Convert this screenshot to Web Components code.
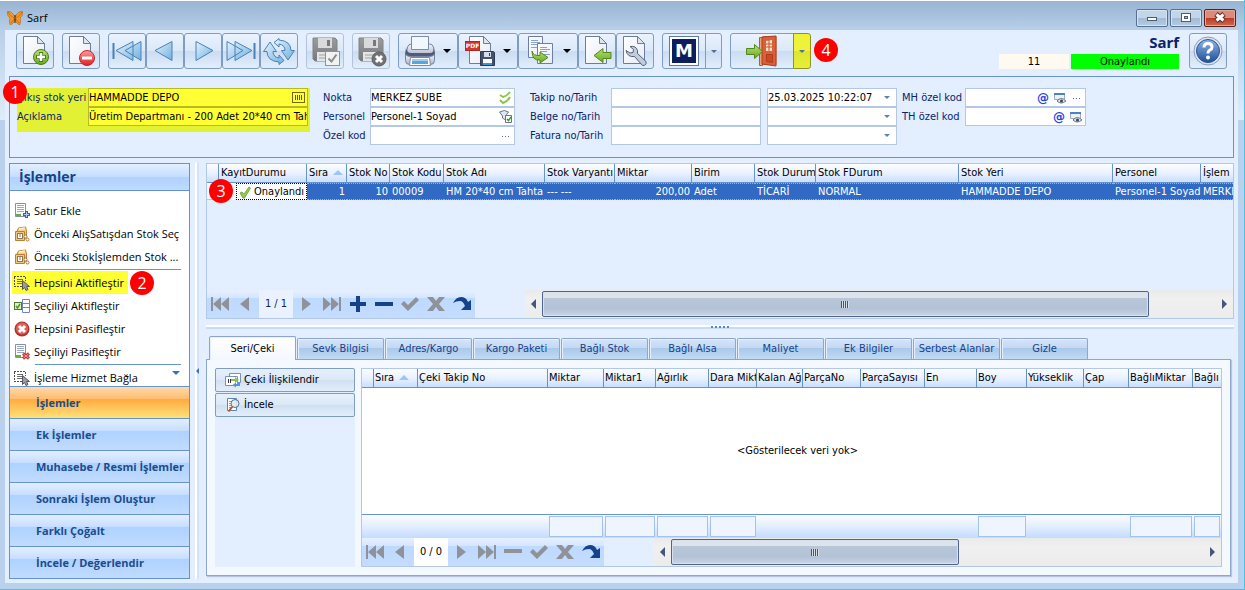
<!DOCTYPE html>
<html lang="tr">
<head>
<meta charset="utf-8">
<title>Sarf</title>
<style>
    html, body { height: 100%; margin: 0; }
    body {
        --line: #6593cf;
        --field-line: #b3c8e6;
        --face: #e3eeff;
        --navy: #0a246a;
        --mark: #ffff33;
        --side-font: "Open Sans", "Noto Sans", sans-serif;
        font-family: "DejaVu Sans Condensed", "Noto Sans", sans-serif;
        font-size: 11px;
        line-height: 16px;
        color: #000;
        overflow: hidden;
    }
</style>
</head>
<body>
<app-window caption="Sarf">
    <tool-bar slot="bar"></tool-bar>
    <entry-form slot="form"></entry-form>
    <side-panel slot="side" caption="İşlemler"></side-panel>
    <split-line slot="side" vertical></split-line>
    <data-grid slot="main" source="stock"></data-grid>
    <split-line slot="main"></split-line>
    <tab-pages slot="main">
        <action-list slot="left"></action-list>
        <data-grid source="series"></data-grid>
    </tab-pages>
</app-window>

<script>
const DEFS = `<defs>
    <linearGradient id="bl" x1="0" y1="0" x2="1" y2="1"><stop offset="0" stop-color="#e6f3fc"/><stop offset="1" stop-color="#6fb0de"/></linearGradient>
    <linearGradient id="gr" x1="0" y1="0" x2="0" y2="1"><stop offset="0" stop-color="#b9e070"/><stop offset="1" stop-color="#65a824"/></linearGradient>
    <linearGradient id="rd" x1="0" y1="0" x2="0" y2="1"><stop offset="0" stop-color="#ff9a94"/><stop offset="1" stop-color="#dc1f26"/></linearGradient>
    <linearGradient id="pg" x1="0" y1="0" x2="1" y2="1"><stop offset="0" stop-color="#fff"/><stop offset="1" stop-color="#e6ebf4"/></linearGradient>
    <linearGradient id="hp" x1="0" y1="0" x2="0" y2="1"><stop offset="0" stop-color="#8db4e4"/><stop offset="1" stop-color="#20509c"/></linearGradient>
    <linearGradient id="gy" x1="0" y1="0" x2="0" y2="1"><stop offset="0" stop-color="#9a9da0"/><stop offset="1" stop-color="#77797c"/></linearGradient>
    <linearGradient id="pr" x1="0" y1="0" x2="0" y2="1"><stop offset="0" stop-color="#f1f4fa"/><stop offset="1" stop-color="#a9b6cd"/></linearGradient>
    <linearGradient id="or" x1="0" y1="0" x2="0" y2="1"><stop offset="0" stop-color="#fde3a0"/><stop offset="1" stop-color="#e9a04a"/></linearGradient>
</defs>`;

const PAGE = `<path d="M4.500 1.500h14l7 7v20h-21z" fill="url(#pg)" stroke="#6c7c9c"/><path d="M18.500 1.500v7h7z" fill="#dfe6f1" stroke="#6c7c9c"/>`;
const FLOPPY = `<path d="M4 3h22l2 2v21H6l-2-2z" fill="url(#gy)" stroke="#808285"/><path d="M9 3h14v10H9z" fill="#d8dadc"/><path d="M18 5h3v6h-3z" fill="#77797c"/><path d="M8 17h16v9H8z" fill="#e4e5e6"/><path d="M10 20h12M10 23h12" stroke="#a0a2a4"/>`;
const SHEET = `<path d="M1.500 .5h10v13h-10z" fill="#fff" stroke="#8390ad"/><path d="M3 2.500h7M3 4.500h7M3 6.500h7M3 8.500h7" stroke="#9aa8c6"/><path d="M2 11h5v2H2z" fill="#6cae3a"/>`;

const ICONS = {
    butterfly: [16, `<path d="M8 7Q5 1 .5 1.500Q0 6 3 8Q2 10 3 14.500Q6 15 8 9Q10 15 13 14.500Q14 10 13 8Q16 6 15.500 1.500Q11 1 8 7z" fill="#f29a2c" stroke="#b8660f" stroke-width=".7"/><path d="M1 2Q3 6 7 8M15 2Q13 6 9 8M4 13l3-4M12 13L9 9" stroke="#c06a12" stroke-width=".8"/><path d="M8 5v8" stroke="#33200a"/>`],
    add: [32, PAGE + `<circle cx="22" cy="22" r="7.500" fill="url(#gr)" stroke="#4a7c1c"/><path d="M22 17v10M17 22h10" stroke="#4a7c1c" stroke-width="4"/><path d="M22 18v8M18 22h8" stroke="#fff" stroke-width="2.500"/>`],
    remove: [32, PAGE + `<circle cx="22" cy="23" r="7.500" fill="url(#rd)" stroke="#c0272d"/><path d="M17 21.500h10v3H17z" fill="#fff"/>`],
    first: [32, `<path d="M2.500 8v16" stroke="#4b80b8" stroke-width="2"/><path d="M5 15.500L22 6.500v19zM14 15.500L30 6.500v19z" fill="url(#bl)" stroke="#4b80b8"/>`],
    prev: [32, `<path d="M6 15.500L23 6.500v19z" fill="url(#bl)" stroke="#4b80b8"/>`],
    next: [32, `<path d="M26 15.500L9 6.500v19z" fill="url(#bl)" stroke="#4b80b8"/>`],
    last: [32, `<path d="M29.500 8v16" stroke="#4b80b8" stroke-width="2"/><path d="M18 15.500L2 6.500v19zM27 15.500L10 6.500v19z" fill="url(#bl)" stroke="#4b80b8"/>`],
    refresh: [32, `<path d="M.5 16.500L7 7l6.500 9.500H10Q10 22 16 23v-3l5 5.500-5 4V27Q4 26 4 16.500z" fill="url(#bl)" stroke="#4b80b8"/><path d="M31.500 15.500L25 25l-6.500-9.500H22Q22 10 16 9v3l-5-4.500 5-4V5q12 1 12 10.500z" fill="url(#bl)" stroke="#4b80b8"/>`],
    saveok: [32, FLOPPY + `<rect x="16.500" y="16.500" width="14" height="14" fill="#f2f2f2" stroke="#909294"/><path d="M19.500 23.500l3 3 5-7" stroke="#8a8d90" stroke-width="2" fill="none"/>`],
    saveno: [32, FLOPPY + `<circle cx="24" cy="24" r="7" fill="#707276" stroke="#5c5e62"/><path d="M21 21l6 6M27 21l-6 6" stroke="#fff" stroke-width="3"/>`],
    print: [32, `<path d="M3.500 12q1-3 4-3h18q3 0 4 3l1 9H2z" fill="url(#pr)" stroke="#76849f"/><path d="M7.500 1.500h17v13h-17z" fill="#f2f6fd" stroke="#7d8ba6"/><path d="M2 13q1 5 5 5h19q4 0 4-5l1 6q-1 3-4 3H5q-3 0-4-3z" fill="#515d77"/><path d="M1.500 19.500q2 2 5 2h19q3 0 5-2v6q0 4-4 4h-21q-4 0-4-4z" fill="url(#pr)" stroke="#76849f"/><path d="M6.500 22.500h19l1 8h-21z" fill="#fff" stroke="#7d8ba6"/><path d="M8 24h16v5H8z" fill="#5aa4dc"/><path d="M8 24h16v2H8z" fill="#9dcdf0"/>`],
    pdf: [32, `<path d="M5.500 1.500h14l7 7v20h-21z" fill="url(#pg)" stroke="#6c7c9c"/><path d="M19.500 1.500v7h7z" fill="#dfe6f1" stroke="#6c7c9c"/><rect x="1.500" y="6.500" width="14" height="9" fill="#d8342c" stroke="#b02620"/><text x="8.500" y="13" font-family="DejaVu Sans" font-weight="bold" font-size="6" text-anchor="middle" fill="#fff">PDF</text><path d="M16.500 16.500h13l1 1v13h-14z" fill="#44516c" stroke="#2e3a50"/><path d="M20 17h7v5h-7z" fill="#d6dee9"/><path d="M25 18h1v3h-1z" fill="#2e3a50"/><path d="M19 24h9v6h-9z" fill="#fff"/><path d="M19 28h9v2h-9z" fill="#4b90d4"/>`],
    copy: [32, `<path d="M4.500 1.500h14v21h-14z" fill="url(#pg)" stroke="#6c7cac"/><path d="M7 5.500h7M7 7.500h9M7 9.500h7M7 12.500h9" stroke="#86a2cf"/><path d="M13.500 8.500h15v20h-15z" fill="url(#pg)" stroke="#6c7cac"/><path d="M16 12.500h7M16 14.500h10M16 16.500h7M16 19.500h10" stroke="#86a2cf"/><path d="M8 16q1 5 8 4.500v-3.500l8 5.500-8 5.500v-3Q8 26 8 16z" fill="url(#gr)" stroke="#53861c"/>`],
    import: [32, PAGE + `<path d="M30 17.500h-8v-4L13 20.500l9 7v-4h8z" fill="url(#gr)" stroke="#53861c"/>`],
    wrench: [32, PAGE + `<path d="M11 11.500q6-1 7.500 4v3l8.500 8q1 4-3.500 4L15.500 21.500q-7 1-8.500-6l4 2.500 3-.5.500-3z" fill="#c2ccda" stroke="#526078"/>`],
    door: [32, `<path d="M18 1.500h13v28H18z" fill="#fbe8d6" stroke="#c47748"/><path d="M14.500 2.500h3v28h-3z" fill="#e9a482" stroke="#b55a30"/><path d="M17 2l14-1v30l-14-2z" fill="#d9603a" stroke="#a9431f"/><path d="M21 6l6-1v11h-6z" fill="#fbe3c4"/><path d="M24 5v11M21 9h6M21 12h6" stroke="#c4532f"/><path d="M21.500 19.500h6v8l-6-1z" fill="#c84b25" stroke="#b03e1a"/><path d="M1.500 13.500h8v-4l8 7-8 7v-4h-8z" fill="url(#gr)" stroke="#53861c"/>`],
    help: [32, `<circle cx="16" cy="16" r="14" fill="#dce6f3" stroke="#8c9dba"/><circle cx="16" cy="16" r="11.500" fill="url(#hp)" stroke="#2f5591"/><path d="M12 12.500q0-4 4-4 4 0 4 3.500 0 2-2 3-2 1-2 3.500" stroke="#fff" stroke-width="3" fill="none"/><circle cx="16" cy="22.500" r="2" fill="#fff"/>`],
    min: [16, `<rect x="3.500" y="7.500" width="9" height="3" fill="#fff" stroke="#4d5c70"/>`],
    max: [16, `<rect x="3.500" y="3.500" width="9" height="8" fill="#fff" stroke="#4d5c70"/><rect x="6.500" y="6.500" width="3" height="2" fill="#9fb6cf" stroke="#4d5c70"/>`],
    close: [16, `<path d="M4 4l8 7M12 4l-8 7" stroke="#5c2620" stroke-width="5"/><path d="M4.500 4.500l7 6M11.500 4.500l-7 6" stroke="#fff" stroke-width="3"/>`],
    barcode: [16, `<rect x="1.500" y="2.500" width="12" height="10" fill="none" stroke="#6f6a1e"/><path d="M4.500 5v5M6.500 5v5M8.500 5v5M10.500 5v5" stroke="#5a5518"/>`],
    checks: [16, `<path d="M2 5l3 2q4-1 7-5M2 10l3 3q5-2 7-6" stroke="#8fc64a" stroke-width="2" fill="none"/>`],
    people: [16, `<path d="M1.500 3q5-3 9 0l-3 4v4l-3-2V7z" fill="#e2e6ee" stroke="#66758e"/><path d="M7.500 6.500h6v7h-6z" fill="#fff" stroke="#66758e"/><path d="M9 10l1.500 1.500L13 8" stroke="#3e9a2a" stroke-width="1.500" fill="none"/>`],
    dots: [16, `<path d="M4 8.500h1M7 8.500h1M10 8.500h1" stroke="#4d6f9f"/>`],
    eye: [16, `<path d="M1.500 3.500h10v6h-10z" fill="#e9f1fb" stroke="#9aacc6"/><path d="M1 3h11v2H1z" fill="#4f80c4"/><path d="M4 11q4-5 9 0q-5 4-9 0z" fill="#dfe3ea" stroke="#6c7684"/><circle cx="8.500" cy="11" r="1.500" fill="#3c4654"/>`],
    rowadd: [16, SHEET + `<path d="M12.500 8v7M9 11.500h7" stroke="#2f66a8" stroke-width="3"/><path d="M12.500 9v5M10 11.500h5" stroke="#a9cdf2"/>`],
    box: [16, `<path d="M2.500 6l2-4 7-1 1 4v6l-2 2h-8z" fill="url(#or)" stroke="#b9802f"/><path d="M1.500 5.500h9v9h-9z" fill="#f3c67c" stroke="#b9802f"/><path d="M5 3l6-1" stroke="#fff2cf" stroke-width="1.500"/><rect x="3.500" y="7.500" width="5" height="5" fill="#fff" stroke="#8a7a60"/><path d="M6 8v3" stroke="#8a7a60"/><circle cx="11.500" cy="10.500" r="1.500" fill="#fff" stroke="#b0762c"/><circle cx="13.500" cy="13.500" r="1.500" fill="#fff" stroke="#b0762c"/>`],
    pick: [16, `<path d="M0 1.500h11M0 11.500h8M.5 2v10M11.500 2v4" stroke="#4d4d4d" stroke-dasharray="2 1" fill="none"/><path d="M3 4.500h6M3 6.500h6M3 8.500h5" stroke="#6b6b6b"/><path d="M8.500 5.500v9l2-2 1.500 3 2-1-1.500-3h3z" fill="#9a9da3" stroke="#55585e"/>`],
    cells: [16, `<path d="M8.500 1.500h7v13h-7zM8.500 5.500h7M8.500 9.500h7" fill="#fff" stroke="#7186c0"/><rect x=".5" y="4.500" width="7" height="7" fill="#dcefc9" stroke="#4e7a2e"/><path d="M2 8l1.500 2L6 6" stroke="#4a9a1c" stroke-width="1.500" fill="none"/>`],
    stop: [16, `<circle cx="8" cy="8" r="7.500" fill="#b5302b"/><circle cx="8" cy="7.500" r="6" fill="#dd625b"/><path d="M5 5l6 6M11 5l-6 6" stroke="#fff" stroke-width="3"/>`],
    rowdel: [16, SHEET + `<path d="M9 9.500l6 5M15 9.500l-6 5" stroke="#c4372f" stroke-width="3"/><path d="M9.500 10l5 4M14.500 10l-5 4" stroke="#f3a09a"/>`],
    tick: [16, `<path d="M2 9l2-1 2 2 5-7 1.500 1-6 10H5z" fill="#94cc4c" stroke="#5c9f2c" stroke-width=".8"/>`],
    link: [16, `<path d="M4.500 1.500h11v9h-11z" fill="#fff" stroke="#7d8fc0"/><path d="M.5 4.500h12v9H.5z" fill="#fff" stroke="#7d8fc0"/><path d="M3.500 7v4M5.500 7v4M7.500 7v2" stroke="#334"/><path d="M6 7h4V5l4 3-4 3V9H6z" fill="#8cc24c"/><path d="M15 10v4h-4v1.500L7.500 13l3.500-2.500V12h2v-2z" fill="#5c93d4"/>`],
    inspect: [16, `<path d="M2.500 1.500h9v12h-9z" fill="#fff" stroke="#5f86ad"/><path d="M4 4.500h4M4 6.500h3M4 8.500h3M4 10.500h3" stroke="#86a2cf"/><circle cx="10" cy="6.500" r="4" fill="#dbe9f6" fill-opacity=".9" stroke="#5e6e84"/><path d="M7.500 9.500L3.500 14.500" stroke="#b5542c" stroke-width="2"/>`],
    nfirst: [20, `<path d="M1 3h2v14H1zM11 3v14l-8-7zM19 3v14l-8-7z" fill="#8f9399"/>`],
    nprev: [20, `<path d="M13 3v14l-9-7z" fill="#8f9399"/>`],
    nnext: [20, `<path d="M6 3v14l9-7z" fill="#8f9399"/>`],
    nlast: [20, `<path d="M19 3h-2v14h2zM9 3v14l8-7zM1 3v14l8-7z" fill="#8f9399"/>`],
    nplus: [20, `<path d="M8 2h4v6h6v4h-6v6H8v-6H2V8h6z" fill="#15428b"/>`],
    nminus: [20, `<path d="M1 8h18v4H1z" fill="#15428b"/>`],
    nminusoff: [20, `<path d="M1 7h18v4H1z" fill="#8f9399"/>`],
    ncheck: [20, `<path d="M1 10l3-3 4 4 8-8 3 3L8 17z" fill="#8f9399"/>`],
    ncross: [20, `<path d="M1 3h6l3 4 3-4h6l-6 7 6 7h-6l-3-4-3 4H1l6-7z" fill="#8f9399"/>`],
    nredo: [20, `<path d="M1 9Q4 3 9 3q5 0 7 5l3-2v10H9l4-4Q11 7 8 7 4 7 1 9z" fill="#15428b"/>`]
};

class UiElement extends HTMLElement {
    constructor() {
        super();
        this.attachShadow({ mode: "open" });
    }

    connectedCallback() {
        const template = document.createElement("template");
        template.innerHTML = this.render();
        this.shadowRoot.replaceChildren(template.content.cloneNode(true));
    }
}

class UiIcon extends UiElement {
    render() {
        const [size, body] = ICONS[this.getAttribute("name")];
        return `<style>:host { display: block; flex: none; } svg { display: block; }</style>
        <svg width="${size}" height="${size}" viewBox="0 0 ${size} ${size}" fill="none" aria-hidden="true">${DEFS}${body}</svg>`;
    }
}

class CalloutBadge extends UiElement {
    render() {
        return `<style>:host {
            display: flex; align-items: center; justify-content: center; flex: none;
            width: 24px; height: 24px; border-radius: 50%; background: #f00; color: #fff;
            font: 16px/24px "Open Sans", sans-serif;
        }</style><slot></slot>`;
    }
}

class AppWindow extends UiElement {
    render() {
        return `<style>
        :host {
            display: flex; flex-direction: column; box-sizing: border-box; min-height: 100vh;
            border: solid #4cc3e0; border-width: 0 1px 1px 0; padding: 0 6px 6px 5px;
            background: linear-gradient(#97b3d1, #b7cfe9 30px, #e0ecfb 120px, #b9d1ec 120px);
            box-shadow: inset 0 1px #fff;
        }
        header { display: flex; align-items: center; height: 30px; padding: 6px 2px 0 2px; box-sizing: border-box; gap: 4px; }
        h1 { flex: 1; margin: 0; font: 11px/16px var(--side-font); }
        header button {
            display: flex; align-items: center; justify-content: center; width: 32px; height: 18px; padding: 0;
            border: 1px solid #58708f; border-radius: 2px; box-shadow: inset 0 0 0 1px #d5e3f3;
            background: linear-gradient(#c3d5e9 50%, #a1bad6 50%, #b5cbe3);
        }
        header button.close { border-color: #5b1f1a; box-shadow: inset 0 0 0 1px #e4a79b; background: linear-gradient(#dc8a7a 50%, #b93a24 50%, #cf6a52); }
        .nav { display: flex; gap: 2px; }
        .client { flex: 1; display: flex; flex-direction: column; background: var(--face); }
        .body { flex: 1; display: flex; padding: 5px 4px 4px; min-height: 0; }
        .side { display: flex; }
        main { flex: 1; min-width: 0; display: flex; flex-direction: column; }
        </style>
        <header>
            <ui-icon name="butterfly"></ui-icon>
            <h1>${this.getAttribute("caption")}</h1>
            <div class="nav">
                <button aria-label="Simge durumuna küçült"><ui-icon name="min"></ui-icon></button>
                <button aria-label="Ekranı kapla"><ui-icon name="max"></ui-icon></button>
                <button class="close" aria-label="Kapat"><ui-icon name="close"></ui-icon></button>
            </div>
        </header>
        <div class="client">
            <slot name="bar"></slot>
            <slot name="form"></slot>
            <div class="body">
                <div class="side"><slot name="side"></slot></div>
                <main><slot name="main"></slot></main>
            </div>
        </div>`;
    }
}

class ToolButton extends UiElement {
    render() {
        const split = this.hasAttribute("split");
        const arrow = this.hasAttribute("menu") ? `<i></i>` : "";
        const label = this.getAttribute("label");
        return `<style>
        :host { display: flex; }
        button {
            flex: 1; display: flex; align-items: center; justify-content: center; gap: 7px; box-sizing: border-box;
            min-width: 38px; height: 36px; padding: 0; border: 1px solid #7f9cc4; border-radius: 3px;
            background: linear-gradient(#eaf3fe, #dbe8f8 50%, #c9dcf2 50%, #e2eefc);
        }
        :host([menu]) button { min-width: 60px; justify-content: flex-start; padding-left: 5px; }
        :host([off]) button { border-color: #b5c3d8; }
        :host([split]) button:first-of-type { border-radius: 3px 0 0 3px; min-width: 44px; }
        :host([split][wide]) button:first-of-type { min-width: 64px; padding-left: 14px; justify-content: flex-start; }
        :host([split]) .drop { flex: none; min-width: 17px; width: 17px; margin-left: -1px; border-radius: 0 3px 3px 0; }
        :host([marked]) .drop { background: linear-gradient(#eef23a 50%, #e0e430 50%, #e8ee38); border-color: #94921e; width: 18px; }
        i { border: 4px solid transparent; border-top-color: #000; border-bottom: 0; }
        .drop i { border-width: 3px 3px 0; border-top-color: #4f7096; }
        </style>
        <button aria-label="${label}"${this.hasAttribute("off") ? " disabled" : ""}><slot></slot>${arrow}</button>
        ${split ? `<button class="drop" aria-label="${label} seçenekleri"><i></i></button>` : ""}`;
    }
}

class ToolBar extends UiElement {
    render() {
        const tool = (name, label, attrs = "") => `<tool-button label="${label}" ${attrs}><ui-icon name="${name}"></ui-icon></tool-button>`;
        return `<style>
        :host { display: flex; align-items: flex-start; gap: 8px; padding: 3px 11px 7px; }
        .group { display: flex; }
        .logo { box-sizing: border-box; width: 30px; height: 30px; border: 1px solid #5f7aa8; padding: 2px; background: #fff; }
        .logo b { display: block; background: #0c1f5c; color: #fff; font: bold 18px/24px "DejaVu Sans", sans-serif; text-align: center; }
        callout-badge { margin: 5px 0 0 -5px; }
        .state { margin: 0 2px 0 auto; display: grid; grid-template-columns: 70px 108px; gap: 2px; text-align: center; }
        .state b { grid-column: 1 / 3; text-align: right; color: var(--navy); font: bold 15px/19px "Noto Sans", sans-serif; }
        .state span { line-height: 15px; background: #fffaf0; }
        .state .ok { background: #0f0; }
        </style>
        ${tool("add", "Yeni")}
        ${tool("remove", "Sil")}
        <div class="group">
            ${tool("first", "İlk")}${tool("prev", "Önceki")}${tool("next", "Sonraki")}${tool("last", "Son")}${tool("refresh", "Yenile")}
        </div>
        ${tool("saveok", "Kaydet", "off")}
        ${tool("saveno", "Vazgeç", "off")}
        <div class="group">
            ${tool("print", "Yazdır", "menu")}${tool("pdf", "PDF kaydet", "menu")}${tool("copy", "Kopyala", "menu")}${tool("import", "Al")}${tool("wrench", "Ayarlar")}
        </div>
        <tool-button label="Modül" split><span class="logo"><b>M</b></span></tool-button>
        ${tool("door", "Çıkış", "split wide marked")}
        <callout-badge>4</callout-badge>
        <div class="state"><b>Sarf</b><span>11</span><span class="ok">Onaylandı</span></div>
        ${tool("help", "Yardım")}`;
    }
}

class FormField extends UiElement {
    render() {
        const label = this.getAttribute("label");
        const value = this.getAttribute("value") || "";
        const box = this.hasAttribute("combo")
            ? `<select id="f" aria-label="${label}"><option>${value}</option></select><i></i>`
            : `<input id="f" type="text" aria-label="${label}" value="${value}">`;
        return `<style>
        :host { display: flex; height: 19px; }
        label { width: var(--label, 0); color: var(--navy); line-height: 19px; white-space: nowrap; font-size: 11px; }
        .box { flex: 1; min-width: 0; display: flex; align-items: center; box-sizing: border-box; background: var(--field, #fff); border: 1px solid var(--frame, var(--field-line)); }
        input, select { flex: 1; min-width: 0; width: 0; height: 17px; padding: 0; border: 0; margin: 0; outline: 0; background: none; font: inherit; color: #000; appearance: none; }
        i { margin: 0 6px; border: 3px solid transparent; border-top-color: #5c80b0; border-bottom: 0; pointer-events: none; }
        ::slotted(b) { color: #1f45e0; font: bold 12px/16px "DejaVu Sans", sans-serif; margin-right: 4px; }
        </style>
        ${this.hasAttribute("bare") ? "" : `<label for="f">${label}</label>`}
        <div class="box">${box}<slot></slot></div>`;
    }
}

class EntryForm extends UiElement {
    render() {
        return `<style>
        :host { display: flex; align-items: flex-start; position: relative; margin: 0 4px; padding: 11px 7px; min-height: 58px; border: 1px solid var(--line); }
        .col { display: flex; flex-direction: column; }
        .hot { --label: 71px; width: 291px; padding: 0 2px 6px 0; background: #e3f135; --field: var(--mark); --frame: #b5bb20; margin-right: 13px; }
        .point { --label: 47px; width: 192px; margin-right: 15px; }
        .track { --label: 81px; width: 231px; margin-right: 6px; }
        .date { width: 130px; margin-right: 5px; }
        .code { --label: 63px; width: 184px; }
        callout-badge { position: absolute; left: -7px; top: 3px; }
        </style>
        <div class="col hot">
            <form-field label="Çıkış stok yeri" value="HAMMADDE DEPO"><ui-icon name="barcode"></ui-icon></form-field>
            <form-field label="Açıklama" value="Üretim Departmanı - 200 Adet 20*40 cm Tahta"></form-field>
        </div>
        <div class="col point">
            <form-field label="Nokta" value="MERKEZ ŞUBE"><ui-icon name="checks"></ui-icon></form-field>
            <form-field label="Personel" value="Personel-1 Soyad"><ui-icon name="people"></ui-icon></form-field>
            <form-field label="Özel kod"><ui-icon name="dots"></ui-icon></form-field>
        </div>
        <div class="col track">
            <form-field label="Takip no/Tarih"></form-field>
            <form-field label="Belge no/Tarih"></form-field>
            <form-field label="Fatura no/Tarih"></form-field>
        </div>
        <div class="col date">
            <form-field bare combo label="Takip tarihi" value="25.03.2025 10:22:07"></form-field>
            <form-field bare combo label="Belge tarihi"></form-field>
            <form-field bare combo label="Fatura tarihi"></form-field>
        </div>
        <div class="col code">
            <form-field label="MH özel kod"><b>@</b><ui-icon name="eye"></ui-icon><ui-icon name="dots"></ui-icon></form-field>
            <form-field label="TH özel kod"><b>@</b><ui-icon name="eye"></ui-icon></form-field>
        </div>
        <callout-badge>1</callout-badge>`;
    }
}

class SidePanel extends UiElement {
    render() {
        const items = [["rowadd", "Satır Ekle"], ["box", "Önceki AlışSatışdan Stok Seç"], ["box", "Önceki Stokİşlemden Stok ..."], null,
            ["pick", "Hepsini Aktifleştir"], ["cells", "Seçiliyi Aktifleştir"], ["stop", "Hepsini Pasifleştir"], ["rowdel", "Seçiliyi Pasifleştir"], null,
            ["pick", "İşleme Hizmet Bağla"]];
        const groups = ["İşlemler", "Ek İşlemler", "Muhasebe / Resmi İşlemler", "Sonraki İşlem Oluştur", "Farklı Çoğalt", "İncele / Değerlendir"];
        return `<style>
        :host { display: flex; flex-direction: column; box-sizing: border-box; width: 181px; border: 1px solid var(--line); background: #fff; font-family: var(--side-font); }
        h2 { margin: 0; padding-left: 9px; font-size: 14px; line-height: 26px; color: #15428b; background: linear-gradient(#e3efff, #c4ddff 50%, #afd2ff 50%, #c0dbff); border-bottom: 1px solid var(--line); }
        .list { flex: 1 1 0; min-height: 0; overflow: hidden; padding-top: 8px; position: relative; }
        button { display: flex; align-items: center; border: 0; background: none; font: inherit; padding: 0; text-align: left; color: #000; white-space: nowrap; }
        .list button { height: 23px; gap: 4px; padding-left: 4px; font-size: 11px; }
        .list .hot { box-sizing: border-box; min-width: 116px; margin-left: 2px; padding-left: 2px; background: var(--mark); }
        hr { margin: 1px 8px 1px 25px; border: 0; height: 1px; background: var(--line); }
        .item { position: relative; }
        callout-badge { position: absolute; left: 120px; top: 0; }
        .more { position: absolute; right: 9px; top: 180px; border: 4px solid transparent; border-top-color: #3c70b4; border-bottom: 0; }
        nav button { width: 100%; height: 32px; padding-left: 26px; font-size: 11px; font-weight: bold; color: #1c4c8c; border-top: 1px solid var(--line); background: linear-gradient(#e3efff, #c4ddff 40%, #afd2ff 40%, #c0dbff); }
        nav .on { background: linear-gradient(#ffd9aa, #ffbb6e 40%, #ffab3f 40%, #fee17b); }
        </style>
        <h2>${this.getAttribute("caption")}</h2>
        <div class="list">
            ${items.map((item, i) => !item ? "<hr>" : `<div class="item"><button class="${i == 4 ? "hot" : ""}"><ui-icon name="${item[0]}"></ui-icon>${item[1]}</button>${i == 4 ? "<callout-badge>2</callout-badge>" : ""}</div>`).join("")}
            <span class="more"></span>
        </div>
        <nav>${groups.map((name, i) => `<button class="${i ? "" : "on"}">${name}</button>`).join("")}</nav>`;
    }
}

class SplitLine extends UiElement {
    render() {
        return `<style>
        :host { display: flex; align-items: center; justify-content: center; height: 4px; margin: 6px 0; background: linear-gradient(#fff 2px, #c8dcfa 2px); }
        :host([vertical]) { width: 4px; height: auto; margin: 0 7px 0 5px; background: linear-gradient(90deg, #fff 2px, #d3e3fb 2px); }
        i { width: 19px; height: 2px; background: repeating-linear-gradient(90deg, #5b86c4 0 2px, transparent 2px 4px); }
        :host([vertical]) i { width: 0; height: 0; background: none; border: 3px solid transparent; border-right-color: #3f6fb0; border-left: 0; }
        </style><i></i>`;
    }
}

const GRIDS = {
    stock: {
        columns: [["", 12], ["KayıtDurumu", 88], ["Sıra", 40, "up"], ["Stok No", 43], ["Stok Kodu", 54], ["Stok Adı", 101], ["Stok Varyantı", 70], ["Miktar", 77],
            ["Birim", 63], ["Stok Durum", 61], ["Stok FDurum", 143], ["Stok Yeri", 154], ["Personel", 88], ["İşlem"]],
        row: ["", "Onaylandı", "1", "10", "00009", "HM 20*40 cm Tahta", "--- ---", "200,00", "Adet", "TİCARİ", "NORMAL", "HAMMADDE DEPO", "Personel-1 Soyad", "MERKE"],
        right: [2, 3, 7],
        count: "1 / 1",
        buttons: ["nplus", "nminus", "ncheck", "ncross", "nredo"],
        thumb: "90%"
    },
    series: {
        columns: [["", 12], ["Sıra", 44, "up"], ["Çeki Takip No", 130], ["Miktar", 56], ["Miktar1", 52], ["Ağırlık", 53], ["Dara Mikt", 48], ["Kalan Ağ", 46],
            ["ParçaNo", 58], ["ParçaSayısı", 64], ["En", 52], ["Boy", 50], ["Yükseklik", 57], ["Çap", 45], ["BağlıMiktar", 64], ["Bağlı"]],
        sums: [3, 4, 5, 6, 11, 14, 15],
        empty: "<Gösterilecek veri yok>",
        count: "0 / 0",
        buttons: ["nminusoff", "ncheck", "ncross", "nredo"],
        thumb: "54%"
    }
};

const NAMES = { nplus: "Ekle", nminus: "Sil", nminusoff: "Sil", ncheck: "Onayla", ncross: "İptal", nredo: "Yenile" };

class DataGrid extends UiElement {
    render() {
        const grid = GRIDS[this.getAttribute("source")];
        const cell = (text, i) => {
            if (i == 1) return `<td class="state"><span><ui-icon name="tick"></ui-icon>${text}</span></td>`;
            return `<td class="${grid.right.includes(i) ? "num" : ""}">${text}</td>`;
        };
        const cols = `<colgroup>${grid.columns.map(c => `<col${c[1] ? ` style="width: ${c[1]}px"` : ""}>`).join("")}</colgroup>`;
        return `<style>
        :host { display: flex; flex-direction: column; position: relative; box-sizing: border-box; border: 1px solid var(--field-line); min-width: 0; background: var(--face); }
        :host([source=stock]) { height: 156px; }
        :host([source=series]) { flex: 1; }
        table { width: 100%; table-layout: fixed; border-collapse: separate; border-spacing: 0; }
        th, td { padding: 0 0 0 2px; overflow: hidden; white-space: nowrap; text-align: left; font-weight: normal; box-sizing: border-box; }
        :host([source=series]) th { padding-left: 1px; }
        th { height: 19px; background: linear-gradient(#fbfdff, #eaf2ff 50%, #c9deff); border-bottom: 1px solid var(--line); border-right: 1px solid var(--line); line-height: 18px; }
        th:last-child { border-right: 0; }
        th i { display: inline-block; margin-left: 5px; border: 5px solid transparent; border-top: 0; border-bottom-color: #99c5f8; vertical-align: 1px; }
        td { height: 17px; line-height: 15px; background: #316ac5; color: #fff; border: dotted #e8a44c; border-width: 1px 0; }
        td:first-child, td.state { background: #f3f8ff; border-color: #fff #fff var(--field-line); border-style: solid; }
        td.state { padding: 0 0 0 17px; color: #000; border-width: 0; }
        td span { display: flex; align-items: center; height: 15px; border: 1px dotted #000; padding-left: 1px; background: #fff; }
        .num { text-align: right; padding-right: 2px; }
        .body { flex: 1; }
        .empty { display: flex; align-items: center; justify-content: center; background: #fff; padding-left: 12px; }
        .sums td { height: 23px; padding: 1px; background: none; border: 0; }
        .sums { background: linear-gradient(#fbfdff, #e3eeff 50%, #c3dcff); border-top: 1px solid var(--line); }
        .sums div { height: 19px; border: 1px solid #a3c3ec; background: #eff5ff; }
        .foot { display: flex; height: 28px; }
        .nav { display: flex; margin-right: 50px; }
        .nav button { display: flex; align-items: center; justify-content: center; width: 26px; height: 28px; padding: 0; border: 0; background: linear-gradient(#e6f0ff, #d3e5ff 30%, #bfdaff 30%, #c3dcff); }
        .count { width: 34px; line-height: 28px; text-align: center; color: var(--navy); background: #eaf2ff; }
        :host([source=series]) .count { background: #fff; color: #000; }
        callout-badge { position: absolute; left: 2px; top: 15px; }
        </style>
        <table>${cols}
            <thead><tr>${grid.columns.map(c => `<th>${c[0]}${c[2] ? "<i></i>" : ""}</th>`).join("")}</tr></thead>
            ${grid.row ? `<tbody><tr>${grid.row.map(cell).join("")}</tr></tbody>` : ""}
        </table>
        <div class="body ${grid.empty ? "empty" : ""}">${(grid.empty || "").replace("<", "&lt;")}</div>
        ${grid.sums ? `<div class="sums"><table role="presentation">${cols}<tr>${grid.columns.map((c, i) => `<td>${grid.sums.includes(i) ? "<div></div>" : ""}</td>`).join("")}</tr></table></div>` : ""}
        <div class="foot">
            <div class="nav">
                <button aria-label="İlk kayıt"><ui-icon name="nfirst"></ui-icon></button>
                <button aria-label="Önceki kayıt"><ui-icon name="nprev"></ui-icon></button>
                <span class="count">${grid.count}</span>
                <button aria-label="Sonraki kayıt"><ui-icon name="nnext"></ui-icon></button>
                <button aria-label="Son kayıt"><ui-icon name="nlast"></ui-icon></button>
                ${grid.buttons.map(b => `<button aria-label="${NAMES[b]}"><ui-icon name="${b}"></ui-icon></button>`).join("")}
            </div>
            <scroll-bar style="--thumb: ${grid.thumb}"></scroll-bar>
        </div>
        ${grid.row ? "<callout-badge>3</callout-badge>" : ""}`;
    }
}

class ScrollBar extends UiElement {
    render() {
        return `<style>
        :host { flex: 1; display: flex; background: linear-gradient(#e9eaeb, #f0f0f0 30%, #ececec); }
        button { display: flex; align-items: center; justify-content: center; width: 17px; padding: 0; border: 0; background: none; }
        button i { border: 5px solid transparent; border-right-color: #46557c; border-left: 0; }
        button:last-child i { border: 5px solid transparent; border-left-color: #46557c; border-right: 0; }
        .track { flex: 1; display: flex; }
        .thumb {
            width: var(--thumb); box-sizing: border-box; margin: 1px 0; border: 1px solid #4f6490; border-radius: 2px;
            display: flex; align-items: center; justify-content: center;
            box-shadow: inset 0 0 0 1px #d9e2ec;
            background: linear-gradient(#dde3ea 25%, #b9c6d8 26%, #b3c2d6 70%, #cbd6e4);
        }
        .thumb i { width: 8px; height: 7px; background: repeating-linear-gradient(90deg, #47546e 0 1px, #d8e0ea 1px 2px); }
        </style>
        <button aria-label="Sola kaydır"><i></i></button>
        <div class="track"><div class="thumb"><i></i></div></div>
        <button aria-label="Sağa kaydır"><i></i></button>`;
    }
}

class TabPages extends UiElement {
    render() {
        const tabs = ["Seri/Çeki", "Sevk Bilgisi", "Adres/Kargo", "Kargo Paketi", "Bağlı Stok", "Bağlı Alsa", "Maliyet", "Ek Bilgiler", "Serbest Alanlar", "Gizle"];
        return `<style>
        :host { flex: 1; display: flex; flex-direction: column; margin: 0 3px 3px 0; }
        .tabs { display: flex; align-items: flex-end; gap: 1px; padding-left: 3px; margin-bottom: -1px; height: 25px; }
        button {
            width: 87px; height: 21px; padding: 0; box-sizing: border-box; border: 1px solid #8ea5cc; border-radius: 2px 2px 0 0; margin-bottom: 1px; border-bottom: 0;
            box-shadow: inset 1px 1px #e6f0fc; background: linear-gradient(#d6e5f7, #c3d8f2 45%, #a9c8ea 45%, #c1daf5);
            font: inherit; color: #15428b; white-space: nowrap;
        }
        button.on { height: 24px; margin-bottom: 0; background: linear-gradient(#fff, #f3f8ff); color: #000; position: relative; }
        .page { flex: 1; display: flex; gap: 6px; padding: 8px; border: 1px solid #8ea5cc; background: #f4f8ff; box-shadow: 1px 1px 1px #b6c6de; }
        </style>
        <div class="tabs" role="tablist">${tabs.map((t, i) => `<button role="tab" class="${i ? "" : "on"}">${t}</button>`).join("")}</div>
        <div class="page"><slot name="left"></slot><slot></slot></div>`;
    }
}

class ActionList extends UiElement {
    render() {
        return `<style>
        :host { display: flex; flex-direction: column; gap: 1px; width: 140px; background: var(--face); }
        button {
            display: flex; align-items: center; gap: 3px; height: 24px; padding: 0 9px; border: 1px solid #7f9cc4; border-radius: 2px; font: inherit; color: #000;
            background: linear-gradient(#e6f0fb, #dbe8f6 50%, #cfdff1 50%, #e3eefb);
        }
        </style>
        <button><ui-icon name="link"></ui-icon>Çeki İlişkilendir</button>
        <button><ui-icon name="inspect"></ui-icon>İncele</button>`;
    }
}

customElements.define("ui-icon", UiIcon);
customElements.define("callout-badge", CalloutBadge);
customElements.define("tool-button", ToolButton);
customElements.define("tool-bar", ToolBar);
customElements.define("form-field", FormField);
customElements.define("entry-form", EntryForm);
customElements.define("side-panel", SidePanel);
customElements.define("split-line", SplitLine);
customElements.define("scroll-bar", ScrollBar);
customElements.define("data-grid", DataGrid);
customElements.define("action-list", ActionList);
customElements.define("tab-pages", TabPages);
customElements.define("app-window", AppWindow);
</script>
</body>
</html>
